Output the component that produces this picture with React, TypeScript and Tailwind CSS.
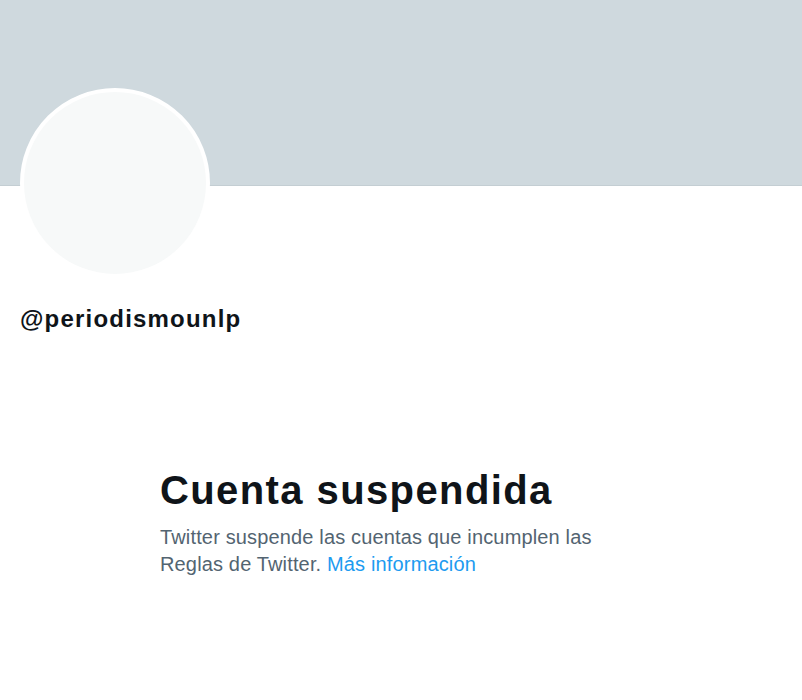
import React from 'react';

export default function App() {
  return (
    <div className="w-[802px] h-[700px] bg-white overflow-hidden" style={{ fontFamily: '"Liberation Sans", Arial, sans-serif' }}>
      <div className="h-[186px] bg-[#cfd9de] border-b border-[#c4ced3]" />
      <div className="px-[20px]">
        <div className="-mt-[98px] w-[190px] h-[190px] rounded-full border-[4px] border-white bg-[#f7f9f9]" />
        <div className="mt-[27px] text-[24px] font-bold text-[#0f1419] leading-[28px] tracking-[1.2px]">@periodismounlp</div>
      </div>
      <div className="ml-[160px] mt-[135px] w-[450px]">
        <h1 className="text-[40px] font-extrabold text-[#0f1419] leading-[44px] tracking-[1.4px]">Cuenta suspendida</h1>
        <p className="mt-[12px] text-[20px] leading-[27px] text-[#536471] tracking-[0.15px]">
          Twitter suspende las cuentas que incumplen las Reglas de Twitter.{' '}
          <span className="text-[#1d9bf0]">Más información</span>
        </p>
      </div>
    </div>
  );
}
